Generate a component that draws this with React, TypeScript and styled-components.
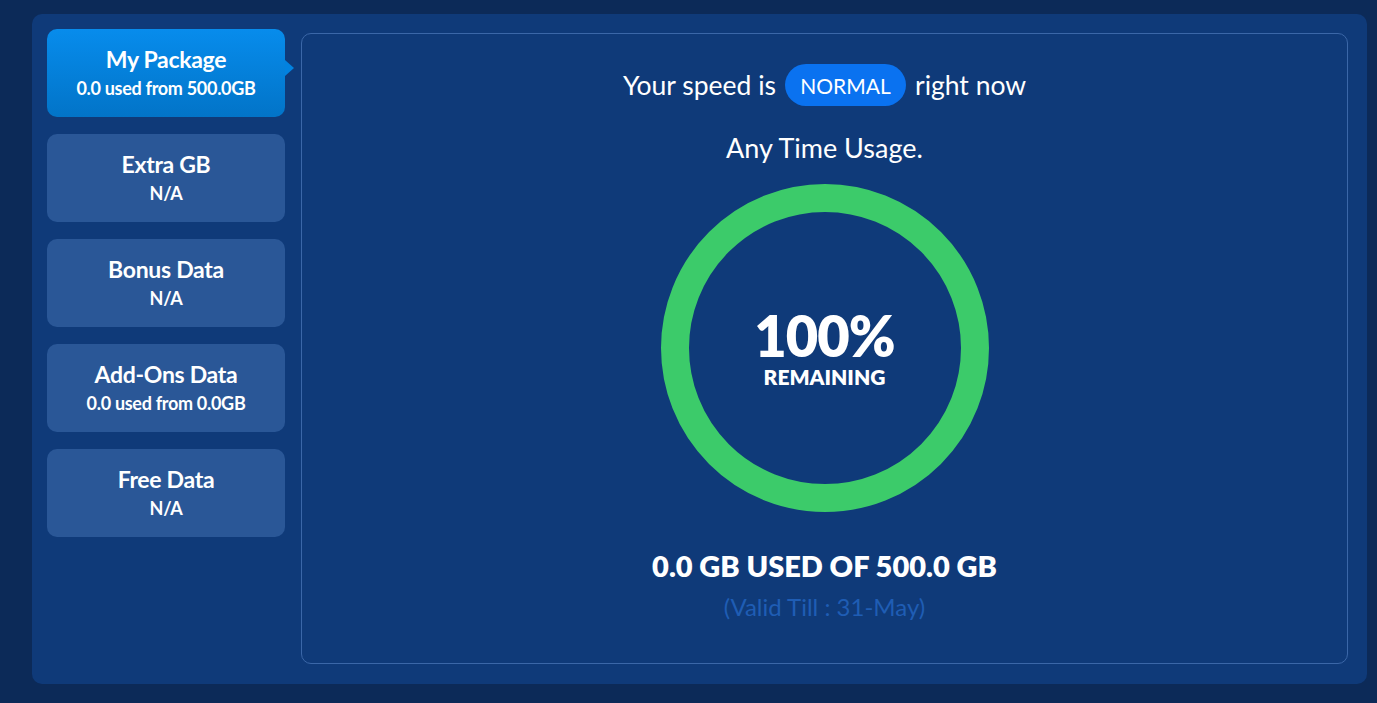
import React from 'react';
import styled, { createGlobalStyle } from 'styled-components';

const GlobalStyle = createGlobalStyle`
  html, body {
    margin: 0;
    padding: 0;
    background: #0c2a58;
    font-family: Lato, "Open Sans", sans-serif;
  }
`;

const Page = styled.div`
  width: 1377px;
  height: 703px;
  box-sizing: border-box;
  padding: 14px 10px 19px 32px;
`;

const Card = styled.div`
  height: 100%;
  box-sizing: border-box;
  background: #0f3a79;
  border-radius: 10px;
  padding: 15px 19px 20px 15px;
  display: flex;
  gap: 16px;
`;

const Sidebar = styled.div`
  width: 238px;
  flex: 0 0 238px;
  display: flex;
  flex-direction: column;
  gap: 17px;
`;

const Tab = styled.div<{ $active?: boolean }>`
  position: relative;
  height: 88px;
  border-radius: 10px;
  background: ${(p) =>
    p.$active ? 'linear-gradient(180deg, #078cec 0%, #0274c8 100%)' : '#2a5797'};
  color: #fff;
  display: flex;
  flex-direction: column;
  align-items: center;
  justify-content: center;
  cursor: pointer;

  &::after {
    content: '';
    display: ${(p) => (p.$active ? 'block' : 'none')};
    position: absolute;
    right: -9px;
    top: 31px;
    border-top: 8px solid transparent;
    border-bottom: 8px solid transparent;
    border-left: 9px solid #0282e0;
  }
`;

const TabTitle = styled.div`
  font-size: 23px;
  font-weight: 700;
  line-height: 28px;
  letter-spacing: -0.3px;
  margin-top: -2px;
`;

const TabSub = styled.div`
  font-size: 18px;
  font-weight: 700;
  line-height: 22px;
  letter-spacing: -0.3px;
  margin-top: 4px;
`;

const Panel = styled.div`
  flex: 1;
  margin-top: 4px;
  border: 1px solid #3b67a8;
  border-radius: 10px;
  display: flex;
  flex-direction: column;
  align-items: center;
  color: #fff;
`;

const SpeedLine = styled.div`
  margin-top: 30px;
  display: flex;
  align-items: center;
  gap: 9px;
  font-size: 26.5px;
  height: 42px;
`;

const SpeedBadge = styled.span`
  height: 42px;
  width: 121px;
  border-radius: 21px;
  background: #0a72f0;
  color: #fff;
  font-size: 21px;
  display: flex;
  align-items: center;
  justify-content: center;
`;

const UsageLabel = styled.div`
  margin-top: 26px;
  font-size: 27px;
  line-height: 32px;
`;

const Ring = styled.div`
  margin-top: 20px;
  width: 328px;
  height: 328px;
  position: relative;
  display: flex;
  flex-direction: column;
  align-items: center;
  justify-content: center;

  svg {
    position: absolute;
    inset: 0;
  }
`;

const Percent = styled.div`
  position: relative;
  font-size: 56px;
  font-weight: 800;
  line-height: 56px;
  letter-spacing: -1px;
`;

const Remaining = styled.div`
  position: relative;
  font-size: 21px;
  font-weight: 800;
  line-height: 22px;
  margin-top: 2px;
`;

const UsedLine = styled.div`
  margin-top: 37px;
  font-size: 29px;
  font-weight: 800;
  line-height: 34px;
`;

const ValidLine = styled.div`
  margin-top: 10px;
  font-size: 24px;
  line-height: 28px;
  color: #1f5db4;
`;

const tabs = [
  { title: 'My Package', sub: '0.0 used from 500.0GB', active: true },
  { title: 'Extra GB', sub: 'N/A' },
  { title: 'Bonus Data', sub: 'N/A' },
  { title: 'Add-Ons Data', sub: '0.0 used from 0.0GB' },
  { title: 'Free Data', sub: 'N/A' },
];

export default function App() {
  return (
    <>
      <GlobalStyle />
      <Page>
        <Card>
          <Sidebar>
            {tabs.map((t) => (
              <Tab key={t.title} $active={t.active}>
                <TabTitle>{t.title}</TabTitle>
                <TabSub>{t.sub}</TabSub>
              </Tab>
            ))}
          </Sidebar>
          <Panel>
            <SpeedLine>
              <span>Your speed is</span>
              <SpeedBadge>NORMAL</SpeedBadge>
              <span>right now</span>
            </SpeedLine>
            <UsageLabel>Any Time Usage.</UsageLabel>
            <Ring>
              <svg width="328" height="328" viewBox="0 0 328 328">
                <circle cx="164" cy="164" r="150" fill="none" stroke="#3ccb6a" strokeWidth="28" />
              </svg>
              <Percent>100%</Percent>
              <Remaining>REMAINING</Remaining>
            </Ring>
            <UsedLine>0.0 GB USED OF 500.0 GB</UsedLine>
            <ValidLine>(Valid Till : 31-May)</ValidLine>
          </Panel>
        </Card>
      </Page>
    </>
  );
}
